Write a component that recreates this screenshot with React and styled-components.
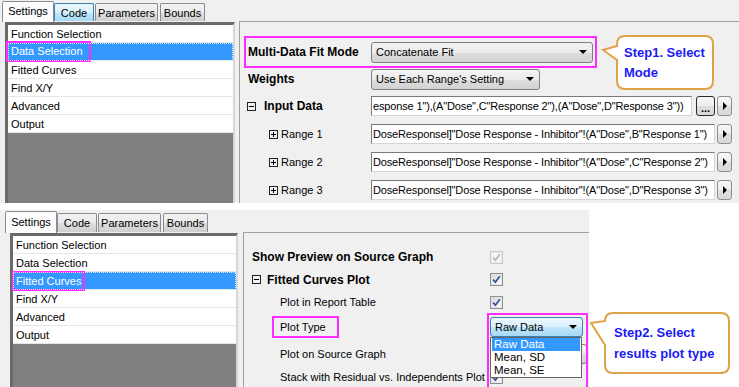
import styled, { createGlobalStyle } from "styled-components";

const GlobalStyle = createGlobalStyle`
  html, body { margin: 0; padding: 0; background: #fff; }
  body {
    font-family: "Liberation Sans", Arial, sans-serif;
    font-size: 11px;
    color: #000;
  }
  * { box-sizing: border-box; }
`;

const Page = styled.div`
  position: relative;
  width: 739px;
  height: 387px;
  overflow: hidden;
  background: #fff;
`;

const Shot = styled.section`
  display: flex;
  flex-direction: column;
  width: ${(p) => p.$w}px;
  height: ${(p) => p.$h}px;
  margin-bottom: ${(p) => p.$gap || 0}px;
  padding-left: ${(p) => p.$pad}px;
  background: #f0f0f0;
  overflow: hidden;
`;

const TabStrip = styled.div`
  display: flex;
  align-items: flex-end;
  height: ${(p) => p.$h}px;
  flex-shrink: 0;
`;

const Tab = styled.div`
  position: relative;
  z-index: ${(p) => (p.$active ? 2 : 1)};
  width: ${(p) => p.$w}px;
  height: ${(p) => (p.$active ? p.$tall : p.$tall - 3)}px;
  margin-right: ${(p) => p.$mr}px;
  margin-bottom: ${(p) => (p.$active ? -1 : 0)}px;
  padding-bottom: ${(p) => (p.$active ? 2 : 0)}px;
  display: flex;
  align-items: center;
  justify-content: center;
  border: 1px solid ${(p) => (p.$hover ? "#3c7fb1" : "#898c95")};
  border-bottom: none;
  border-radius: 2px 2px 0 0;
  background: ${(p) =>
    p.$active
      ? "#fcfcfc"
      : p.$hover
      ? "linear-gradient(#eaf6fd, #d9f0fc 50%, #bee6fd 51%, #a7d9f5)"
      : "linear-gradient(#f2f2f2, #ebebeb 50%, #dddddd 51%, #cfcfcf)"};
  white-space: nowrap;
`;

const Body = styled.div`
  display: flex;
  flex: 1;
  min-height: 0;
`;

const ListBox = styled.div`
  flex-shrink: 0;
  width: ${(p) => p.$w}px;
  margin: 1px ${(p) => p.$gap}px 0 ${(p) => p.$left}px;
  border-style: solid;
  border-width: 3px 2px 0 3px;
  border-color: #6b6b6b #d6d6d6 #d6d6d6 #6b6b6b;
  background: #808080;
`;

const ListItem = styled.div`
  height: 18px;
  display: flex;
  align-items: center;
  padding-left: 3px;
  border-bottom: 1px solid #e6e6e6;
  background: ${(p) => (p.$selected ? "#3399ff" : "#fff")};
  color: ${(p) => (p.$selected ? "#fff" : "#000")};
  outline: ${(p) => (p.$selected ? "1px dotted #d8ecff" : "none")};
  outline-offset: -1px;
  white-space: nowrap;
`;

const Mark = styled.span`
  display: inline-block;
  line-height: ${(p) => p.$lh}px;
  padding: 0 ${(p) => p.$r}px 0 ${(p) => p.$l}px;
  margin: 0 -${(p) => p.$r}px 0 -${(p) => p.$l}px;
  outline: 2px solid #ff2cff;
`;

const Props = styled.div`
  flex: 1;
  min-width: 0;
  border-top: 1px solid #a0a0a0;
  border-left: 1px solid #a0a0a0;
  padding: ${(p) => p.$pt}px 0 0 ${(p) => p.$pl}px;
`;

const Row = styled.div`
  position: relative;
  display: flex;
  align-items: center;
  height: ${(p) => p.$h}px;
`;

const Label = styled.div`
  flex-shrink: 0;
  display: flex;
  align-items: center;
  width: ${(p) => p.$w}px;
  padding-left: ${(p) => p.$indent || 0}px;
  gap: ${(p) => p.$gap || 0}px;
  font-weight: ${(p) => (p.$bold ? 700 : 400)};
  font-size: ${(p) => (p.$bold ? 12 : 11)}px;
  white-space: nowrap;
`;

const TreeBox = styled.span`
  position: relative;
  flex-shrink: 0;
  width: 9px;
  height: 9px;
  margin-left: ${(p) => p.$shift || 0}px;
  border: 1px solid #222;
  &::before {
    content: "";
    position: absolute;
    left: 1px;
    right: 1px;
    top: 3px;
    height: 1px;
    background: #000;
  }
  &::after {
    content: "";
    display: ${(p) => (p.$plus ? "block" : "none")};
    position: absolute;
    top: 1px;
    bottom: 1px;
    left: 3px;
    width: 1px;
    background: #000;
  }
`;

const Combo = styled.div`
  position: relative;
  width: ${(p) => p.$w}px;
  height: ${(p) => p.$h || 21}px;
  display: flex;
  align-items: center;
  justify-content: space-between;
  padding: 0 5px 0 4px;
  border: 1px solid ${(p) => (p.$hover ? "#3c7fb1" : "#7f7f7f")};
  border-radius: 3px;
  background: ${(p) =>
    p.$hover
      ? "linear-gradient(#eaf6fd, #d9f0fc 50%, #bee6fd 51%, #a7d9f5)"
      : "linear-gradient(#f3f3f3, #ebebeb 50%, #dddddd 51%, #d3d3d3)"};
  white-space: nowrap;
`;

const DownArrow = styled.span`
  margin-left: auto;
  width: 0;
  height: 0;
  border-left: 4px solid transparent;
  border-right: 4px solid transparent;
  border-top: 4px solid #000;
`;

const Field = styled.div`
  width: ${(p) => p.$w}px;
  height: 20px;
  display: flex;
  align-items: center;
  padding: 0 1px;
  border: 1px solid;
  border-color: #7a7a7a #d4d4d4 #d4d4d4 #7a7a7a;
  background: #fff;
  white-space: nowrap;
  overflow: hidden;
  letter-spacing: -0.15px;
`;

const SmallButton = styled.div`
  flex-shrink: 0;
  width: ${(p) => p.$w}px;
  height: 20px;
  margin-left: ${(p) => p.$ml}px;
  display: flex;
  align-items: ${(p) => (p.$dots ? "flex-end" : "center")};
  justify-content: center;
  border: 1px solid ${(p) => (p.$dots ? "#2b2b2b" : "#8e8f8f")};
  border-radius: 3px;
  background: linear-gradient(#f7f7f7, #ececec 50%, #dedede 51%, #d8d8d8);
  font-weight: 700;
  font-size: 11px;
  line-height: 14px;
`;

const RightArrow = styled.span`
  width: 0;
  height: 0;
  border-top: 4px solid transparent;
  border-bottom: 4px solid transparent;
  border-left: 4px solid #000;
  margin-left: 1px;
`;

const CheckBox = styled.span`
  display: flex;
  align-items: center;
  justify-content: center;
  width: 13px;
  height: 13px;
  border: 1px solid ${(p) => (p.$off ? "#c9c9c9" : "#8e8f8f")};
  background: ${(p) =>
    p.$off ? "#f6f6f6" : "linear-gradient(135deg, #cfcfcf, #f4f4f4 70%, #fff)"};
  box-shadow: inset 0 0 0 1px ${(p) => (p.$off ? "#ececec" : "#e6e6e6")};
`;

const Control = styled.div`
  position: relative;
  display: flex;
  align-items: center;
`;

const DropList = styled.div`
  position: absolute;
  top: 20px;
  left: 0;
  z-index: 3;
  width: 92px;
  padding: 0 1px;
  border: 1px solid #646464;
  background: #fff;
`;

const DropItem = styled.div`
  height: 13px;
  line-height: 13px;
  padding-left: 2px;
  font-size: 11.5px;
  background: ${(p) => (p.$selected ? "#3399ff" : "#fff")};
  color: ${(p) => (p.$selected ? "#fff" : "#000")};
`;

const MagentaFrame = styled.div`
  position: absolute;
  z-index: 4;
  left: ${(p) => p.$x}px;
  top: ${(p) => p.$y}px;
  width: ${(p) => p.$w}px;
  height: ${(p) => p.$h}px;
  border: 2px solid #ff2cff;
  pointer-events: none;
`;

const Bubble = styled.div`
  position: absolute;
  z-index: 6;
  left: ${(p) => p.$x}px;
  top: ${(p) => p.$y}px;
  width: ${(p) => p.$w}px;
  height: ${(p) => p.$h}px;
`;

const BubbleShape = styled.svg`
  position: absolute;
  left: 0;
  top: 0;
  overflow: visible;
`;

const BubbleText = styled.div`
  position: relative;
  padding: ${(p) => p.$pt}px 0 0 ${(p) => p.$pl}px;
  font-weight: 700;
  font-size: 13px;
  line-height: ${(p) => p.$lh}px;
  color: #1a1af2;
  white-space: pre-line;
`;

const Tick = ({ off }) => (
  <CheckBox $off={off}>
    <svg width="9" height="9" viewBox="0 0 9 9">
      <path
        d="M1.2 4.6 L3.4 7.2 L7.8 1.2"
        fill="none"
        stroke={off ? "#b5b5b5" : "#30509a"}
        strokeWidth="1.7"
      />
    </svg>
  </CheckBox>
);

const tabs = [
  { name: "Settings", w: 52, mr: 0 },
  { name: "Code", w: 40, mr: 1 },
  { name: "Parameters", w: 63, mr: 2 },
  { name: "Bounds", w: 45, mr: 0 },
];

const Tabs = ({ h, hoverCode }) => (
  <TabStrip $h={h}>
    {tabs.map((t, i) => (
      <Tab
        key={t.name}
        $w={t.w}
        $mr={t.mr}
        $tall={h}
        $active={i === 0}
        $hover={hoverCode && t.name === "Code"}
      >
        {t.name}
      </Tab>
    ))}
  </TabStrip>
);

const sections = [
  "Function Selection",
  "Data Selection",
  "Fitted Curves",
  "Find X/Y",
  "Advanced",
  "Output",
];

const Sections = ({ selected, mark, ...rest }) => (
  <ListBox {...rest}>
    {sections.map((s) => (
      <ListItem key={s} $selected={s === selected}>
        {s === selected ? (
          <Mark $lh={mark.lh} $l={mark.l} $r={mark.r}>
            {s}
          </Mark>
        ) : (
          s
        )}
      </ListItem>
    ))}
  </ListBox>
);

const ranges = [
  'DoseResponsel]"Dose Response - Inhibitor"!(A"Dose",B"Response 1")',
  'DoseResponsel]"Dose Response - Inhibitor"!(A"Dose",C"Response 2")',
  'DoseResponsel]"Dose Response - Inhibitor"!(A"Dose",D"Response 3")',
];

const Bubble1Path =
  "M24 2 H104 Q112 2 112 10 V47 Q112 55 104 55 H24 Q16 55 16 47 V26 L2 16 L16 12 V10 Q16 2 24 2 Z";
const Bubble2Path =
  "M24 2 H132 Q140 2 140 10 V54 Q140 62 132 62 H24 Q16 62 16 54 V34 L2 12 L16 10 Q16 2 24 2 Z";

export default function App() {
  return (
    <Page>
      <GlobalStyle />

      <Shot $w={739} $h={203} $gap={7} $pad={2}>
        <Tabs h={21} hoverCode />
        <Body>
          <Sections
            $w={230}
            $left={3}
            $gap={4}
            selected="Data Selection"
            mark={{ lh: 17, l: 3, r: 6 }}
          />
          <Props $pt={16} $pl={8}>
            <Row $h={28}>
              <MagentaFrame $x={-4} $y={-2} $w={353} $h={32} />
              <Label $w={123} $bold>
                Multi-Data Fit Mode
              </Label>
              <Combo $w={222}>
                Concatenate Fit
                <DownArrow />
              </Combo>
            </Row>
            <Row $h={26}>
              <Label $w={123} $bold>
                Weights
              </Label>
              <Combo $w={169}>
                Use Each Range's Setting
                <DownArrow />
              </Combo>
            </Row>
            <Row $h={28}>
              <Label $w={123} $bold $gap={8}>
                <TreeBox $shift={-1} />
                Input Data
              </Label>
              <Control>
                <Field $w={321}>
                  esponse 1"),(A"Dose",C"Response 2"),(A"Dose",D"Response 3"))
                </Field>
                <SmallButton $w={19} $ml={4} $dots>
                  ...
                </SmallButton>
                <SmallButton $w={15} $ml={2}>
                  <RightArrow />
                </SmallButton>
              </Control>
            </Row>
            {ranges.map((r, i) => (
              <Row $h={28} key={r}>
                <Label $w={123} $indent={21} $gap={3}>
                  <TreeBox $plus />
                  Range {i + 1}
                </Label>
                <Control>
                  <Field $w={344}>{r}</Field>
                  <SmallButton $w={15} $ml={2}>
                    <RightArrow />
                  </SmallButton>
                </Control>
              </Row>
            ))}
          </Props>
        </Body>
      </Shot>

      <Shot $w={589} $h={177} $pad={5}>
        <Tabs h={22} />
        <Body>
          <Sections
            $w={228}
            $left={5}
            $gap={5}
            selected="Fitted Curves"
            mark={{ lh: 16, l: 2, r: 2 }}
          />
          <Props $pt={13} $pl={8}>
            <Row $h={22}>
              <Label $w={238} $bold>
                Show Preview on Source Graph
              </Label>
              <Tick off />
            </Row>
            <Row $h={23}>
              <Label $w={238} $bold $gap={6}>
                <TreeBox />
                Fitted Curves Plot
              </Label>
              <Tick />
            </Row>
            <Row $h={22}>
              <Label $w={238} $indent={28}>
                Plot in Report Table
              </Label>
              <Tick />
            </Row>
            <Row $h={27}>
              <Label $w={238} $indent={28}>
                <Mark $lh={18} $l={6} $r={11}>
                  Plot Type
                </Mark>
              </Label>
              <Control>
                <MagentaFrame $x={-3} $y={-4} $w={101} $h={80} />
                <Combo $w={93} $h={20} $hover>
                  Raw Data
                  <DownArrow />
                </Combo>
                <DropList>
                  <DropItem $selected>Raw Data</DropItem>
                  <DropItem>Mean, SD</DropItem>
                  <DropItem>Mean, SE</DropItem>
                </DropList>
              </Control>
            </Row>
            <Row $h={27}>
              <Label $w={238} $indent={28}>
                Plot on Source Graph
              </Label>
              <Combo $w={97} $h={20}>
                <DownArrow />
              </Combo>
            </Row>
            <Row $h={20}>
              <Label $w={238} $indent={28}>
                Stack with Residual vs. Independents Plot
              </Label>
              <Tick />
            </Row>
          </Props>
        </Body>
      </Shot>

      <Bubble $x={601} $y={34} $w={116} $h={58}>
        <BubbleShape width="116" height="58">
          <path d={Bubble1Path} fill="#fff" stroke="#e0a246" strokeWidth="2" />
        </BubbleShape>
        <BubbleText $pt={9} $pl={23} $lh={20}>
          {"Step1. Select\nMode"}
        </BubbleText>
      </Bubble>

      <Bubble $x={589} $y={311} $w={142} $h={64}>
        <BubbleShape width="142" height="64">
          <path d={Bubble2Path} fill="#fff" stroke="#e0a246" strokeWidth="2" />
        </BubbleShape>
        <BubbleText $pt={11} $pl={25} $lh={21}>
          {"Step2. Select\nresults plot type"}
        </BubbleText>
      </Bubble>
    </Page>
  );
}
